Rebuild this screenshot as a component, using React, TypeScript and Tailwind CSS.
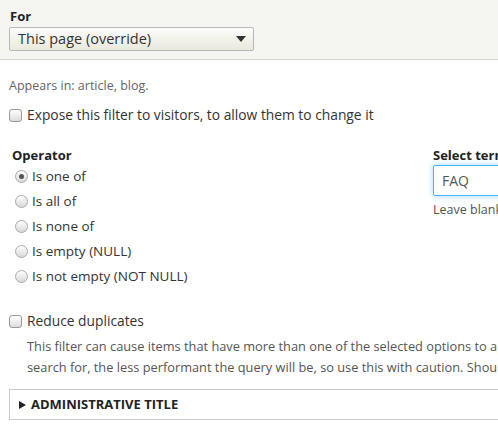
export default function App() {
  const ops = ["Is one of", "Is all of", "Is none of", "Is empty (NULL)", "Is not empty (NOT NULL)"];
  return (
    <div className="w-[498px] h-[436px] overflow-hidden bg-white text-[#333] font-['Open_Sans',sans-serif]">
      <div className="bg-[#f5f5f2] border-b border-[#d4d4d0] h-[60px] pt-[8px] px-[10px]">
        <div className="text-[13px] font-bold text-[#222] leading-[16px]">For</div>
        <div className="mt-[3px] ml-[-1px] w-[245px] h-[24px] rounded-[2px] border border-[#b8b8b8] bg-gradient-to-b from-[#fcfcfa] to-[#e9e9dd] flex items-center justify-between pl-[8px] pr-[7px]">
          <span className="text-[14.5px] text-[#333]">This page (override)</span>
          <span className="w-0 h-0 border-l-[5px] border-r-[5px] border-t-[6px] border-l-transparent border-r-transparent border-t-[#333]" />
        </div>
      </div>

      <div className="pl-[9px] mt-[18px] text-[12.5px] text-[#666] leading-[16px]">Appears in: article, blog.</div>

      <label className="flex items-center pl-[9px] mt-[11px] text-[13.8px] text-[#333]">
        <Checkbox />
        <span className="ml-[5px]">Expose this filter to visitors, to allow them to change it</span>
      </label>

      <div className="flex mt-[20px]">
        <div className="w-[420px] shrink-0 pl-[12px]">
          <div className="text-[13px] font-bold text-[#222] leading-[18px]">Operator</div>
          <div className="flex flex-col">
            {ops.map((o, i) => (
              <div key={o} className="flex items-center h-[25px] pl-[3px] text-[13.5px]">
                <Radio checked={i === 0} />
                <span className="ml-[4px]">{o}</span>
              </div>
            ))}
          </div>
        </div>
        <div className="shrink-0 pl-[13px]">
          <div className="text-[13px] font-bold text-[#222] leading-[18px] whitespace-nowrap">Select terms</div>
          <div className="mt-[1px] w-[160px] h-[31px] rounded-[2px] border border-[#40b6ff] shadow-[0_0_6px_#9fd7ff] flex items-center pl-[8px] text-[14px] text-[#555]">
            FAQ
          </div>
          <div className="mt-[5px] text-[12.5px] text-[#555] whitespace-nowrap">Leave blank for all.</div>
        </div>
      </div>

      <label className="flex items-center pl-[9px] mt-[22px] text-[13.8px] text-[#333]">
        <Checkbox />
        <span className="ml-[5px]">Reduce duplicates</span>
      </label>
      <div className="pl-[27px] mt-[5px] text-[12.8px] text-[#555] leading-[21px] whitespace-nowrap">
        <div>This filter can cause items that have more than one of the selected options to appear as duplicate results.</div>
        <div>search for, the less performant the query will be, so use this with caution. Should you use this filter.</div>
      </div>

      <div className="ml-[9px] mt-[11px] h-[31px] border border-[#ccc] border-r-0 flex items-center pl-[9px]">
        <span className="w-0 h-0 border-t-[4px] border-b-[4px] border-l-[7px] border-t-transparent border-b-transparent border-l-[#222]" />
        <span className="ml-[5px] text-[13px] font-bold text-[#222] uppercase">Administrative title</span>
      </div>
    </div>
  );
}

function Checkbox() {
  return (
    <span className="w-[13px] h-[13px] rounded-[3px] border border-[#999] bg-gradient-to-b from-[#fff] to-[#dcdcdc] shrink-0" />
  );
}

function Radio({ checked }: { checked: boolean }) {
  return (
    <span className="w-[13px] h-[13px] rounded-full border border-[#aaa] bg-gradient-to-b from-[#fff] to-[#d8d8d8] shrink-0 flex items-center justify-center">
      {checked && <span className="w-[5px] h-[5px] rounded-full bg-[#555]" />}
    </span>
  );
}
